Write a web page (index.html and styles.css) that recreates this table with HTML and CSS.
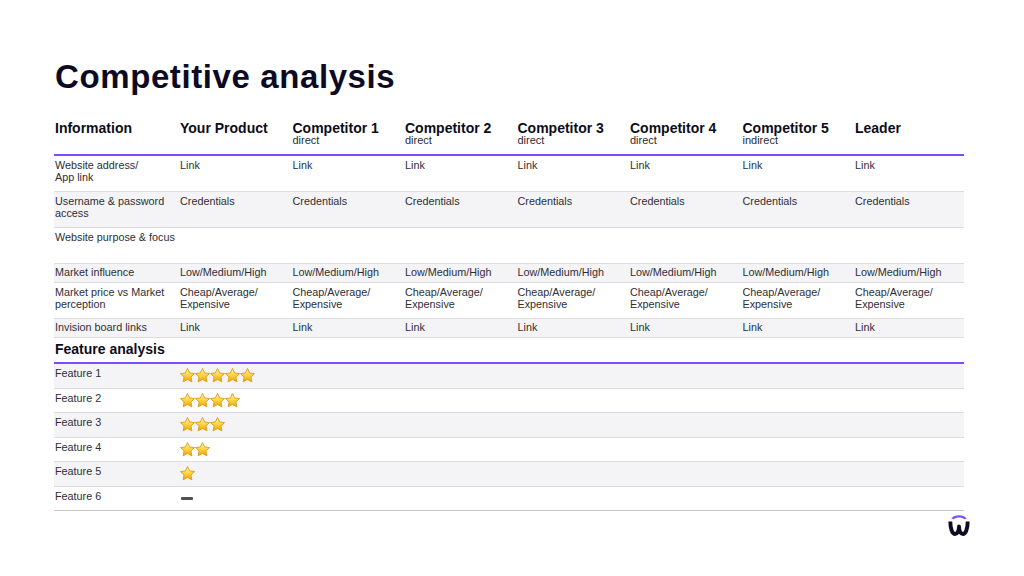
FILE: index.html
```html
<!DOCTYPE html>
<html lang="en">
<head>
<meta charset="utf-8">
<title>Competitive analysis</title>
<link rel="stylesheet" href="styles.css">
</head>
<body>
<svg class="defs" width="0" height="0" aria-hidden="true">
  <defs>
    <linearGradient id="starFill" x1="0" y1="0" x2="0" y2="1">
      <stop offset="0" stop-color="#fff8d0"/>
      <stop offset="0.4" stop-color="#ffdd55"/>
      <stop offset="1" stop-color="#f0a400"/>
    </linearGradient>
    <symbol id="star" viewBox="1.2 1.2 21.6 21.6">
      <path d="M12 1.9l3.05 6.45 7.05.9-5.2 4.850 1.4 7.05L12 17.6l-6.3 3.55 1.4-7.05-5.2-4.85 7.05-.9z" fill="url(#starFill)" stroke="#dc9a12" stroke-width="1.3" stroke-linejoin="round"/>
    </symbol>
  </defs>
</svg>
<div class="page">
  <h1 class="title">Competitive analysis</h1>

  <table class="grid info">
    <colgroup>
      <col class="c-first"><col class="c"><col class="c"><col class="c"><col class="c"><col class="c"><col class="c"><col class="c-last">
    </colgroup>
    <thead>
      <tr>
        <th>Information</th>
        <th>Your Product</th>
        <th>Competitor 1<span class="sub">direct</span></th>
        <th>Competitor 2<span class="sub">direct</span></th>
        <th>Competitor 3<span class="sub">direct</span></th>
        <th>Competitor 4<span class="sub">direct</span></th>
        <th>Competitor 5<span class="sub">indirect</span></th>
        <th>Leader</th>
      </tr>
    </thead>
    <tbody>
      <tr class="tall">
        <td>Website address/<br>App link</td>
        <td>Link</td><td>Link</td><td>Link</td><td>Link</td><td>Link</td><td>Link</td><td>Link</td>
      </tr>
      <tr class="tall shade">
        <td>Username &amp; password<br>access</td>
        <td>Credentials</td><td>Credentials</td><td>Credentials</td><td>Credentials</td><td>Credentials</td><td>Credentials</td><td>Credentials</td>
      </tr>
      <tr class="tall">
        <td>Website purpose &amp; focus</td>
        <td></td><td></td><td></td><td></td><td></td><td></td><td></td>
      </tr>
      <tr class="shade">
        <td>Market influence</td>
        <td>Low/Medium/High</td><td>Low/Medium/High</td><td>Low/Medium/High</td><td>Low/Medium/High</td><td>Low/Medium/High</td><td>Low/Medium/High</td><td>Low/Medium/High</td>
      </tr>
      <tr class="tall">
        <td>Market price vs Market<br>perception</td>
        <td>Cheap/Average/<br>Expensive</td><td>Cheap/Average/<br>Expensive</td><td>Cheap/Average/<br>Expensive</td><td>Cheap/Average/<br>Expensive</td><td>Cheap/Average/<br>Expensive</td><td>Cheap/Average/<br>Expensive</td><td>Cheap/Average/<br>Expensive</td>
      </tr>
      <tr class="shade">
        <td>Invision board links</td>
        <td>Link</td><td>Link</td><td>Link</td><td>Link</td><td>Link</td><td>Link</td><td>Link</td>
      </tr>
    </tbody>
  </table>

  <h2 class="section">Feature analysis</h2>

  <table class="grid features">
    <colgroup>
      <col class="c-first"><col class="c-rest">
    </colgroup>
    <tbody>
      <tr class="shade">
        <td>Feature 1</td>
        <td><span class="stars"><svg><use href="#star"/></svg><svg><use href="#star"/></svg><svg><use href="#star"/></svg><svg><use href="#star"/></svg><svg><use href="#star"/></svg></span></td>
      </tr>
      <tr>
        <td>Feature 2</td>
        <td><span class="stars"><svg><use href="#star"/></svg><svg><use href="#star"/></svg><svg><use href="#star"/></svg><svg><use href="#star"/></svg></span></td>
      </tr>
      <tr class="shade">
        <td>Feature 3</td>
        <td><span class="stars"><svg><use href="#star"/></svg><svg><use href="#star"/></svg><svg><use href="#star"/></svg></span></td>
      </tr>
      <tr>
        <td>Feature 4</td>
        <td><span class="stars"><svg><use href="#star"/></svg><svg><use href="#star"/></svg></span></td>
      </tr>
      <tr class="shade">
        <td>Feature 5</td>
        <td><span class="stars"><svg><use href="#star"/></svg></span></td>
      </tr>
      <tr class="last">
        <td>Feature 6</td>
        <td><span class="dash"></span></td>
      </tr>
    </tbody>
  </table>

  <div class="footer">
    <svg class="logo" viewBox="0 0 22 22" width="22" height="22" aria-label="logo">
      <path d="M3.4 4.4 C6.4 0.2 15.6 0.2 18.6 4.4 L16.4 5.2 C13.6 2.8 8.4 2.8 5.6 5.2 Z" fill="#7d4dfa"/>
      <path d="M2.3 7.6 C2.3 15.5 4.6 20 7 20 C9.2 20 11 17.2 11 12.4 C11 17.2 12.8 20 15 20 C17.4 20 19.7 15.5 19.7 7.6" fill="none" stroke="#0e0c24" stroke-width="3.9" stroke-linejoin="round"/>
    </svg>
  </div>
</div>
</body>
</html>
```

FILE: styles.css
```css
* { box-sizing: border-box; }

html, body {
  margin: 0;
  padding: 0;
  background: #ffffff;
}

body {
  font-family: "Liberation Sans", Arial, Helvetica, sans-serif;
  color: #2e2e36;
  width: 1024px;
  height: 576px;
  overflow: hidden;
}

.defs {
  position: absolute;
  width: 0;
  height: 0;
}

.page {
  padding: 59px 60px 0 54px;
}

.title {
  margin: 0 0 0 1px;
  font-size: 33px;
  line-height: 36px;
  font-weight: 700;
  color: #0d0b24;
  letter-spacing: 0.6px;
}

.grid {
  width: 910px;
  border-collapse: collapse;
  table-layout: fixed;
}

.c-first { width: 126px; }
.c { width: 112.5px; }
.c-last { width: 109px; }

.info {
  margin-top: 25px;
}

.info th {
  text-align: left;
  vertical-align: top;
  padding: 0;
  height: 35px;
  font-size: 14px;
  line-height: 16px;
  font-weight: 700;
  color: #0d0d1a;
  border-bottom: 2px solid #7d4dfa;
  white-space: nowrap;
}

.info th:first-child { padding-left: 1px; }

.sub {
  display: block;
  margin-top: -1px;
  font-size: 11px;
  line-height: 10px;
  font-weight: 400;
  color: #2a2a30;
}

.grid td {
  vertical-align: top;
  padding: 3px 0 0 0;
  font-size: 10.8px;
  line-height: 12px;
  color: #2e2e36;
  border-bottom: 1px solid #dcdcdf;
  white-space: nowrap;
}

.grid td:first-child { padding-left: 1px; }

.info td { height: 19px; padding-top: 2px; }
.info tr.tall td { height: 36px; padding-top: 3px; }

.shade td { background: #f4f4f6; }

.section {
  margin: 3px 0 0;
  width: 910px;
  padding: 0 0 0 1px;
  height: 23px;
  font-size: 14px;
  line-height: 16px;
  font-weight: 700;
  color: #0d0d1a;
  border-bottom: 2px solid #7d4dfa;
}

.features td {
  height: 24.5px;
  padding-top: 3px;
}

.features tr.last td {
  border-bottom-color: #c9c9cc;
}

.stars {
  display: flex;
  gap: 0;
  margin-top: 1px;
}

.stars svg {
  width: 15px;
  height: 15px;
  display: block;
}

.dash {
  display: block;
  width: 12px;
  height: 3px;
  margin: 7px 0 0 1px;
  background: #505055;
  border-radius: 1px;
}

.footer {
  display: flex;
  justify-content: flex-end;
  margin: 3px -6px 0 0;
}

.logo {
  display: block;
}
```
